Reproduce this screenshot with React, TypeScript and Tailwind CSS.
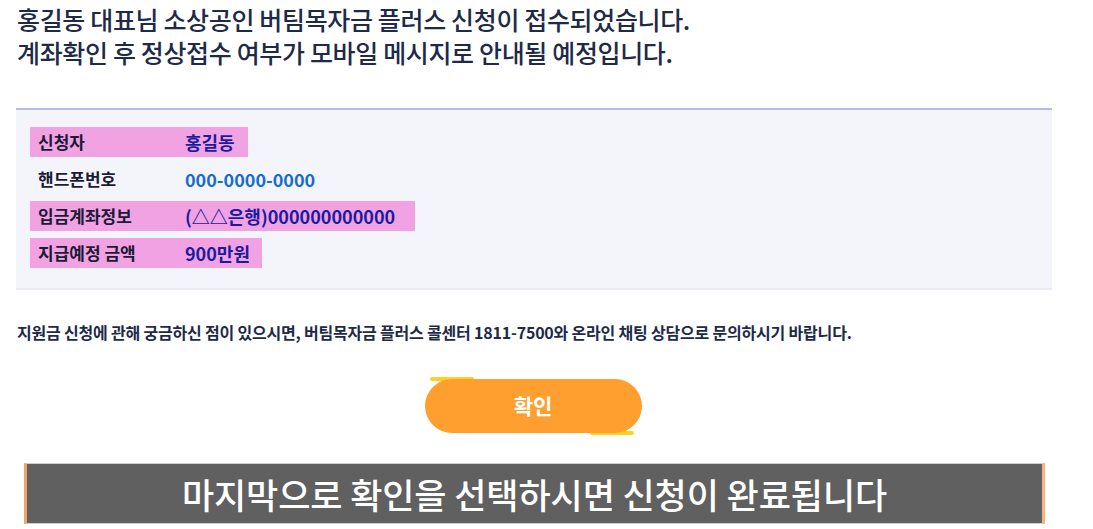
import React from "react";

const font = { fontFamily: '"Noto Sans CJK KR", "Noto Sans", sans-serif' };

type Row = { label: string; value: string; highlight: boolean; w: string; valueColor: string };

const rows: Row[] = [
  { label: "신청자", value: "홍길동", highlight: true, w: "w-[218px]", valueColor: "text-[#1c1ba0]" },
  { label: "핸드폰번호", value: "000-0000-0000", highlight: false, w: "w-[218px]", valueColor: "text-[#1a6cc9]" },
  { label: "입금계좌정보", value: "(△△은행)000000000000", highlight: true, w: "w-[385px]", valueColor: "text-[#1c1ba0]" },
  { label: "지급예정 금액", value: "900만원", highlight: true, w: "w-[232px]", valueColor: "text-[#1c1ba0]" },
];

export default function App() {
  return (
    <div className="w-[1093px] h-[529px] bg-white overflow-hidden" style={font}>
      <div className="w-[1036px] ml-[16px]">
        <div className="pt-[3px] pl-[1px] text-[25px] leading-[33px] font-medium text-[#1e2a48] tracking-[-0.35px]">
          <p className="whitespace-nowrap">홍길동 대표님 소상공인 버팀목자금 플러스 신청이 접수되었습니다.</p>
          <p className="whitespace-nowrap">계좌확인 후 정상접수 여부가 모바일 메시지로 안내될 예정입니다.</p>
        </div>

        <div className="mt-[39px] border-t-2 border-b-2 border-t-[#b6bbea] border-b-[#e8ebf5] bg-[#f3f5fa] pt-[17px] pb-[20px] pl-[14px]">
          <div className="flex flex-col gap-[7px]">
            {rows.map((r) => (
              <div
                key={r.label}
                className={`flex items-center h-[30px] ${r.w} ${r.highlight ? "bg-[#f1a2e2]" : ""}`}
              >
                <span className="w-[155px] shrink-0 pl-[8px] text-[17px] font-bold text-[#1b1b36] whitespace-nowrap">{r.label}</span>
                <span className={`text-[18px] font-bold whitespace-nowrap ${r.valueColor}`}>{r.value}</span>
              </div>
            ))}
          </div>
        </div>

        <p className="mt-[31px] pl-[1px] text-[16px] leading-[22px] font-semibold text-[#1e2a48] tracking-[-0.2px] whitespace-nowrap">
          지원금 신청에 관해 궁금하신 점이 있으시면, 버팀목자금 플러스 콜센터 1811-7500와 온라인 채팅 상담으로 문의하시기 바랍니다.
        </p>

        <div className="mt-[36px] flex justify-center pr-[2px]">
          <div className="relative">
            <span className="absolute left-[5px] top-[-2px] w-[44px] h-[4px] rounded-full bg-[#ffd21f]" />
            <span className="absolute right-[8px] bottom-[-2px] w-[44px] h-[4px] rounded-full bg-[#ffd21f]" />
            <button className="relative w-[217px] h-[54px] rounded-full bg-[#ff9f30] text-white text-[21px] font-bold">
              확인
            </button>
          </div>
        </div>
      </div>

      <div className="mt-[30px] ml-[24px] w-[1021px] h-[61px] bg-[#606060] border-l-[3px] border-r-[3px] border-l-[#f0a468] border-r-[#f7b27a] border-y border-y-[#cfcfcf] flex items-center justify-center">
        <span className="text-white text-[35px] leading-[40px] font-medium tracking-[-0.1px] whitespace-nowrap">마지막으로 확인을 선택하시면 신청이 완료됩니다</span>
      </div>
    </div>
  );
}
